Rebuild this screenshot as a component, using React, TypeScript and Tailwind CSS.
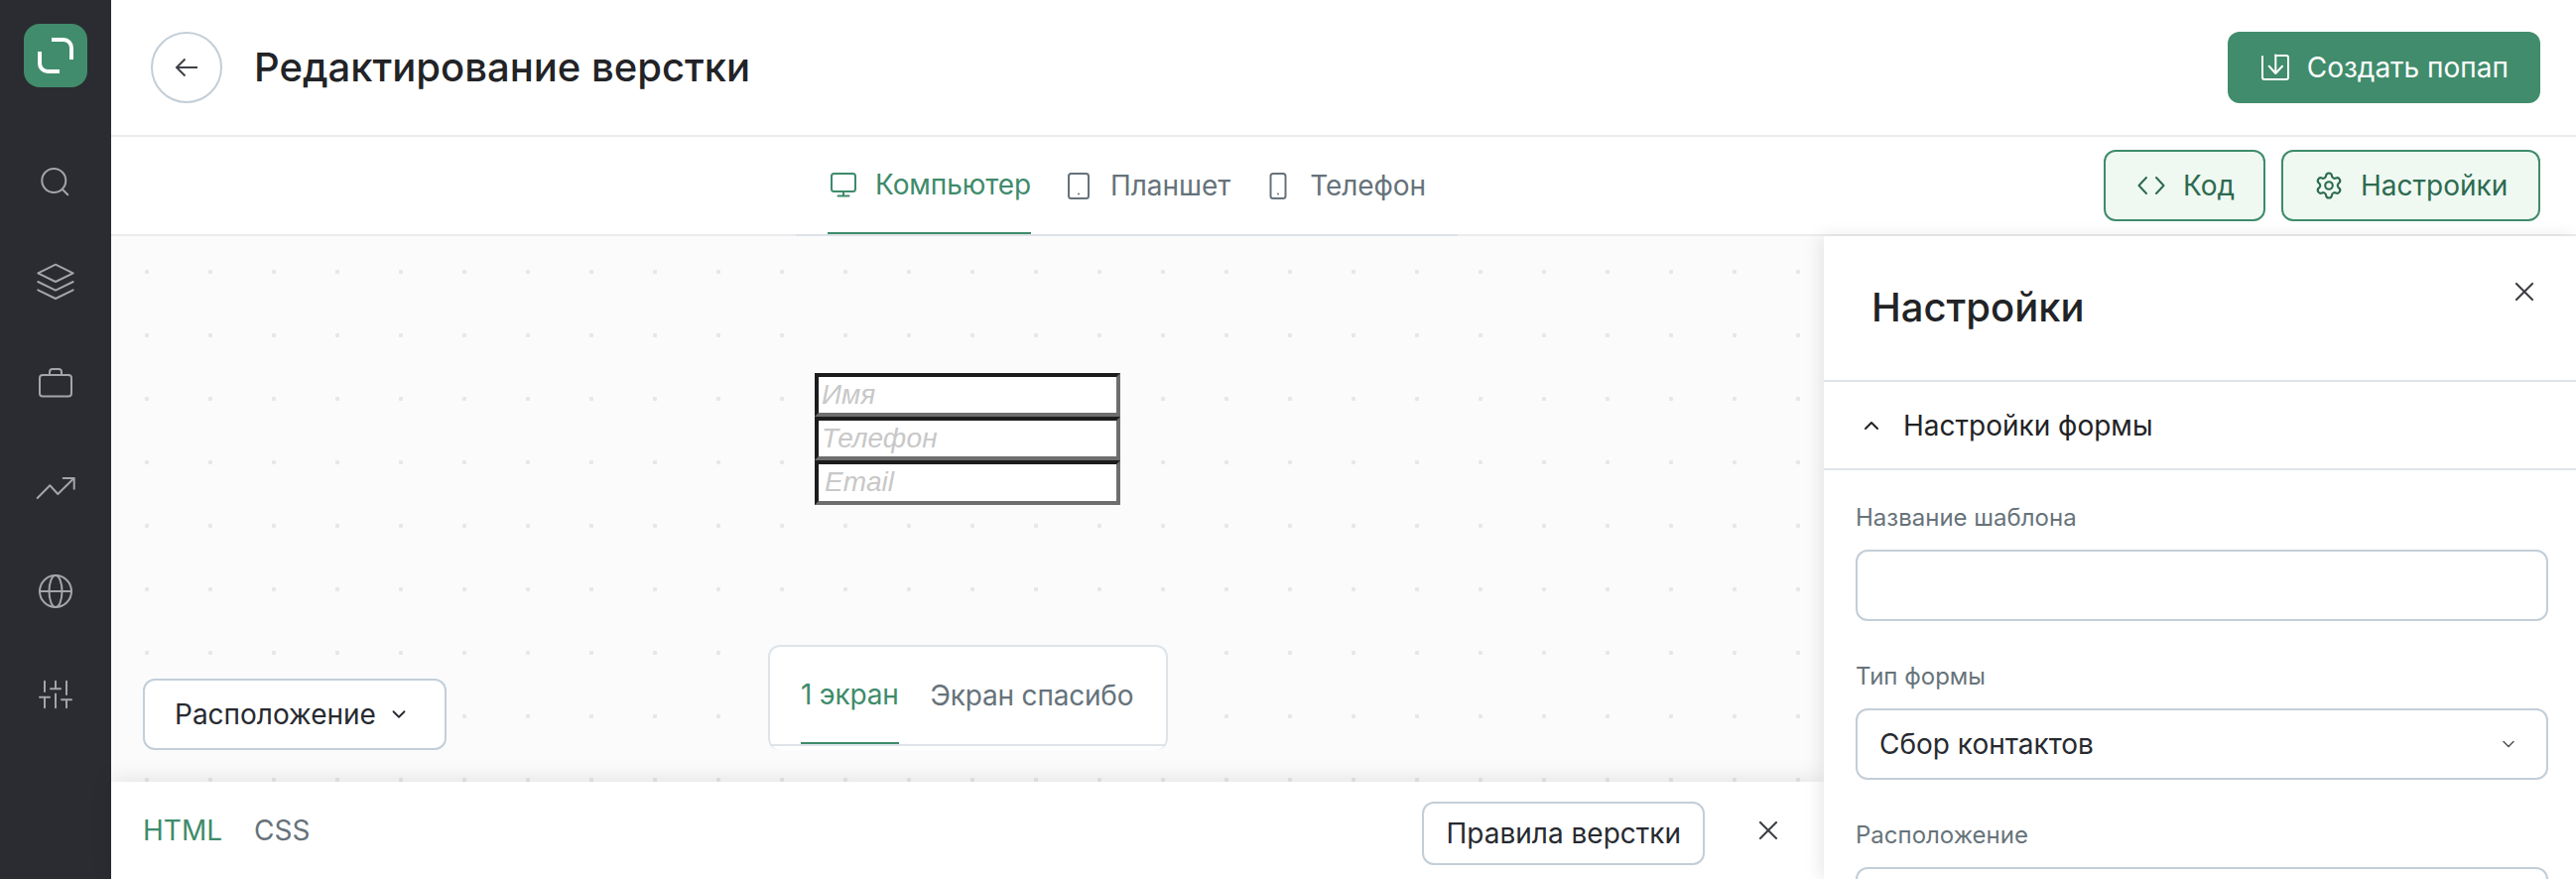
import type { ReactNode } from "react";
import { ChevronDown, ChevronUp, Settings, X } from "lucide-react";

function NavIcon({ className, children }: { className?: string; children: ReactNode }) {
  return (
    <svg
      viewBox="0 0 40 40"
      fill="none"
      stroke="#a4a5a8"
      strokeWidth="2"
      strokeLinecap="round"
      strokeLinejoin="round"
      className={className}
    >
      {children}
    </svg>
  );
}

function Sidebar() {
  return (
    <aside className="w-[112px] shrink-0 h-full bg-[#2a2c31] flex flex-col items-center pt-6">
      <div className="w-16 h-16 rounded-[16px] bg-[#418c6c] shrink-0">
        <svg viewBox="0 0 64 64" fill="none" stroke="#fff" strokeWidth="4" className="w-16 h-16">
          <path d="M28 16H40a8 8 0 0 1 8 8V36" />
          <path d="M16 28V40a8 8 0 0 0 8 8H36" />
        </svg>
      </div>
      <NavIcon className="w-10 h-10 mt-[74px]">
        <circle cx="18.3" cy="20" r="12" />
        <path d="M27 29L32.3 34.3" />
      </NavIcon>
      <NavIcon className="w-10 h-10 mt-[62px]">
        <path d="M2.3 11.3L20 2.7L37.7 11.3L20 20Z" />
        <path d="M2.3 20L20 28.7L37.7 20" />
        <path d="M2.3 28.3L20 37L37.7 28.3" />
      </NavIcon>
      <NavIcon className="w-10 h-10 mt-[62px]">
        <rect x="4" y="12" width="32" height="21.5" rx="3" />
        <path d="M14 12V9a3 3 0 0 1 3-3h6a3 3 0 0 1 3 3v3" />
      </NavIcon>
      <NavIcon className="w-10 h-10 mt-[64px]">
        <path d="M1.7 32L14.3 19.3L22.3 28L38.3 12.3" />
        <path d="M27.7 12H38.7V22.7" />
      </NavIcon>
      <NavIcon className="w-10 h-10 mt-[66px]">
        <circle cx="20" cy="20" r="16" />
        <ellipse cx="20" cy="20" rx="6.5" ry="16" />
        <path d="M4 20H36" />
      </NavIcon>
      <NavIcon className="w-10 h-10 mt-[64px]">
        <path d="M9 6.7V17M4 22.7H14M9 22.7V33.3" />
        <path d="M20 6.7V14.3M15 14.3H25M20 19.5V33.3" />
        <path d="M31 6.7V20M26 25.3H36M31 25.3V33.3" />
      </NavIcon>
    </aside>
  );
}

function Header() {
  return (
    <header className="h-[138px] shrink-0 border-b-2 border-[#eaecee] flex items-center pl-10 pr-9">
      <button className="w-[72px] h-[72px] rounded-full border-2 border-[#c3ced8] flex items-center justify-center">
        <svg viewBox="0 0 32 32" fill="none" stroke="#3e4147" strokeWidth="2" className="w-8 h-8">
          <path d="M27 16H6M14.5 7.5L6 16L14.5 24.5" />
        </svg>
      </button>
      <h1 className="ml-8 text-[40px] leading-[48px] font-[550] text-[#222326]">
        Редактирование верстки
      </h1>
      <button className="ml-auto h-[72px] px-8 rounded-xl bg-[#408c6c] text-white text-[28px] flex items-center gap-4">
        <svg viewBox="0 0 32 32" fill="none" stroke="#fff" strokeWidth="2" strokeLinecap="round" strokeLinejoin="round" className="w-8 h-8">
          <path d="M3 5V26a2 2 0 0 0 2 2H27a2 2 0 0 0 2-2V6a2 2 0 0 0-2-2H16" />
          <path d="M16.3 3.5V22M9.7 14.7L16.3 22L23 14.7" />
        </svg>
        Создать попап
      </button>
    </header>
  );
}

function DeviceTab({ label, active, children }: { label: string; active?: boolean; children: ReactNode }) {
  return (
    <div
      className={
        active
          ? "h-full -mb-[2px] border-b-2 border-[#3e8b6b] flex items-center gap-4 text-[#3e8b6b]"
          : "h-full -mb-[2px] flex items-center gap-4 text-[#66727a]"
      }
    >
      <svg viewBox="0 0 32 32" fill="none" stroke="currentColor" strokeWidth="2" strokeLinecap="round" strokeLinejoin="round" className="w-8 h-8">
        {children}
      </svg>
      {label}
    </div>
  );
}

function Toolbar() {
  return (
    <div className="h-[100px] shrink-0 border-b-2 border-[#eaecee] flex pr-9 text-[28px]">
      <div className="ml-[690px] w-[667px] h-[100px] border-b-2 border-[#dde2e7] px-8 flex gap-8 tracking-[-0.08px]">
        <DeviceTab label="Компьютер" active>
          <rect x="4" y="5" width="24" height="18" rx="2.5" />
          <path d="M16 23V27M10.5 27.5H21.5" />
        </DeviceTab>
        <DeviceTab label="Планшет">
          <rect x="6" y="4" width="20" height="25" rx="2.5" />
          <path d="M16 24.5V24.6" />
        </DeviceTab>
        <DeviceTab label="Телефон">
          <rect x="8.5" y="4" width="15" height="25" rx="2.5" />
          <path d="M16 24.5V24.6" />
        </DeviceTab>
      </div>
      <div className="ml-auto flex items-center gap-4 text-[#2d6a50]">
        <button className="w-[163px] h-[72px] pl-[30px] rounded-xl border-2 border-[#3e8b6b] bg-[#eff9f2] flex items-center gap-4">
          <svg viewBox="0 0 32 32" fill="none" stroke="currentColor" strokeWidth="2" strokeLinecap="round" strokeLinejoin="round" className="w-8 h-8">
            <path d="M11 8L3.5 16L11 24M21 8L28.5 16L21 24" />
          </svg>
          Код
        </button>
        <button className="w-[261px] h-[72px] pl-[30px] rounded-xl border-2 border-[#3e8b6b] bg-[#eff9f2] flex items-center gap-4">
          <span className="w-8 h-8 flex items-center justify-center">
            <Settings size={30} strokeWidth={1.7} />
          </span>
          Настройки
        </button>
      </div>
    </div>
  );
}

function Canvas() {
  return (
    <div className="flex-1 flex flex-col bg-[#fbfbfb] bg-[radial-gradient(circle_at_36px_36px,#e6e7e8_2px,transparent_2.5px)] bg-[size:64px_64px]">
      <div className="mt-[138px] ml-[709px] w-[308px] flex flex-col font-['Liberation_Sans',sans-serif] italic text-[28px] leading-[36px] text-[#c8c8c8]">
        <div className="h-11 bg-white border-4 border-t-[#1c1c1c] border-l-[#1c1c1c] border-r-[#6e6e6e] border-b-[#6e6e6e] pl-[3px]">Имя</div>
        <div className="h-11 bg-white border-4 border-t-[#1c1c1c] border-l-[#1c1c1c] border-r-[#6e6e6e] border-b-[#6e6e6e] pl-[3px]">Телефон</div>
        <div className="h-[45px] bg-white border-4 border-t-[#1c1c1c] border-l-[#1c1c1c] border-r-[#6e6e6e] border-b-[#6e6e6e] pl-[6px]">Email</div>
      </div>
      <div className="mt-auto pl-8 pb-8 flex items-end text-[28px]">
        <button className="w-[306px] h-[72px] px-[30px] bg-white rounded-xl border-2 border-[#c3ced8] text-[#272a30] flex items-center gap-3">
          Расположение
          <ChevronDown size={22} strokeWidth={2} />
        </button>
        <div className="ml-[324px] w-[403px] h-[106px] bg-white rounded-xl border-t-2 border-x-2 border-[#dfe4e9] pb-1">
          <div className="h-full border-b-2 border-[#dfe4e9] px-[31px] flex gap-8 whitespace-nowrap tracking-[-0.2px]">
            <div className="h-full -mb-[2px] border-b-2 border-[#3e8b6b] flex items-center text-[#3e8b6b]">1 экран</div>
            <div className="h-full flex items-center text-[#66727a]">Экран спасибо</div>
          </div>
        </div>
      </div>
    </div>
  );
}

function BottomBar() {
  return (
    <div className="relative h-[98px] shrink-0 bg-white shadow-[0_-4px_20px_rgba(0,0,0,0.09)] flex items-center pl-8 pr-10 gap-8 text-[28px]">
      <span className="text-[#3e8b6b]">HTML</span>
      <span className="text-[#66727a]">CSS</span>
      <div className="ml-auto flex items-center gap-12">
        <button className="mt-[6px] h-16 px-[22px] rounded-xl border-2 border-[#c3ced8] text-[#272a30]">Правила верстки</button>
        <X size={32} strokeWidth={1.6} className="text-[#3f4146]" />
      </div>
    </div>
  );
}

function Field({ label, children }: { label: string; children?: ReactNode }) {
  return (
    <div className="flex flex-col gap-4">
      <label className="text-[24px] leading-8 text-[#67737a]">{label}</label>
      <div className="h-[72px] shrink-0 rounded-xl border-2 border-[#c3ced8] pl-[22px] pr-7 flex items-center justify-between text-[28px] text-[#272a30]">
        {children}
      </div>
    </div>
  );
}

function SettingsPanel() {
  return (
    <aside className="relative w-[758px] shrink-0 h-full bg-white shadow-[-4px_0_16px_rgba(0,0,0,0.09)]">
      <div className="h-[147px] border-b-2 border-[#dfe4e9] flex justify-between items-start pl-12 pr-9 pt-12">
        <h2 className="text-[40px] leading-[48px] font-medium text-[#222326]">Настройки</h2>
        <X size={32} strokeWidth={1.6} className="-mt-2 text-[#3f4146]" />
      </div>
      <div className="h-[89px] border-b-2 border-[#dfe4e9] flex items-center pl-9 gap-5 text-[28px] text-[#222326]">
        <ChevronUp size={24} strokeWidth={2} />
        Настройки формы
      </div>
      <div className="pl-8 pr-7 pt-8 flex flex-col gap-10">
        <Field label="Название шаблона" />
        <Field label="Тип формы">
          Сбор контактов
          <ChevronDown size={20} strokeWidth={1.8} className="text-[#505459]" />
        </Field>
        <Field label="Расположение" />
      </div>
    </aside>
  );
}

export default function App() {
  return (
    <div className="w-[2596px] h-[886px] overflow-hidden flex bg-white font-['Inter',sans-serif]">
      <Sidebar />
      <main className="flex-1 min-w-0 h-full flex flex-col">
        <Header />
        <Toolbar />
        <div className="flex-1 min-h-0 flex">
          <div className="flex-1 min-w-0 flex flex-col">
            <Canvas />
            <BottomBar />
          </div>
          <SettingsPanel />
        </div>
      </main>
    </div>
  );
}
